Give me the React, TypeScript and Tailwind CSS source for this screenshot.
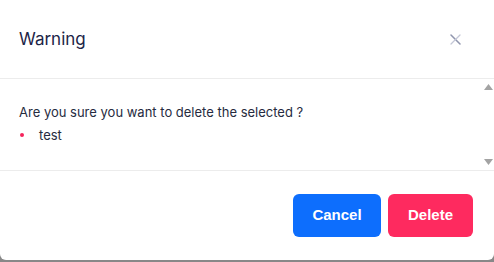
import React from "react";

export default function App() {
  return (
    <div className="w-[494px] h-[262px] bg-[#888888] overflow-hidden" style={{ fontFamily: "Inter, 'Noto Sans', sans-serif" }}>
      <div className="w-[494px] h-[260px] bg-white rounded-b-[6px] flex flex-col">
        <div className="h-[79px] shrink-0 flex items-center justify-between pl-[19px] pr-[33px] border-b border-[#ececec]">
          <span className="text-[17px] text-[#1c2447] leading-none">Warning</span>
          <svg width="11" height="11" viewBox="0 0 11 11" className="mt-[1px]">
            <path d="M1 1 L10 10" stroke="#8f95ad" strokeWidth="1.5" strokeLinecap="round" />
            <path d="M10 1 L1 10" stroke="#c3c7d6" strokeWidth="1.3" strokeLinecap="round" />
          </svg>
        </div>
        <div className="h-[92px] shrink-0 flex border-b border-[#ececec]">
          <div className="flex-1 pl-[19px] pt-[23px] text-[13px] text-[#262b40]">
            <div className="leading-[20px]">Are you sure you want to delete the selected ?</div>
            <div className="flex items-center leading-[20px] mt-[3px]">
              <span className="w-[4px] h-[4px] rounded-full bg-[#f5245c] ml-[1px]" />
              <span className="ml-[15px]">test</span>
            </div>
          </div>
          <div className="w-[12px] flex flex-col justify-between items-center pt-[5px] pb-[5px]">
            <svg width="9" height="6" viewBox="0 0 9 6"><path d="M4.5 0 L9 6 L0 6 Z" fill="#a3a3a3" /></svg>
            <svg width="9" height="6" viewBox="0 0 9 6"><path d="M0 0 L9 0 L4.5 6 Z" fill="#a3a3a3" /></svg>
          </div>
        </div>
        <div className="flex justify-end gap-[7px] pt-[23px] pr-[21px]" style={{ fontFamily: "'Liberation Sans', Arial, sans-serif" }}>
          <button className="w-[88px] h-[43px] rounded-[6px] bg-[#0d6efd] text-white font-bold text-[15px]">Cancel</button>
          <button className="w-[85px] h-[43px] rounded-[6px] bg-[#fe2a5f] text-white font-bold text-[15px]">Delete</button>
        </div>
      </div>
    </div>
  );
}
